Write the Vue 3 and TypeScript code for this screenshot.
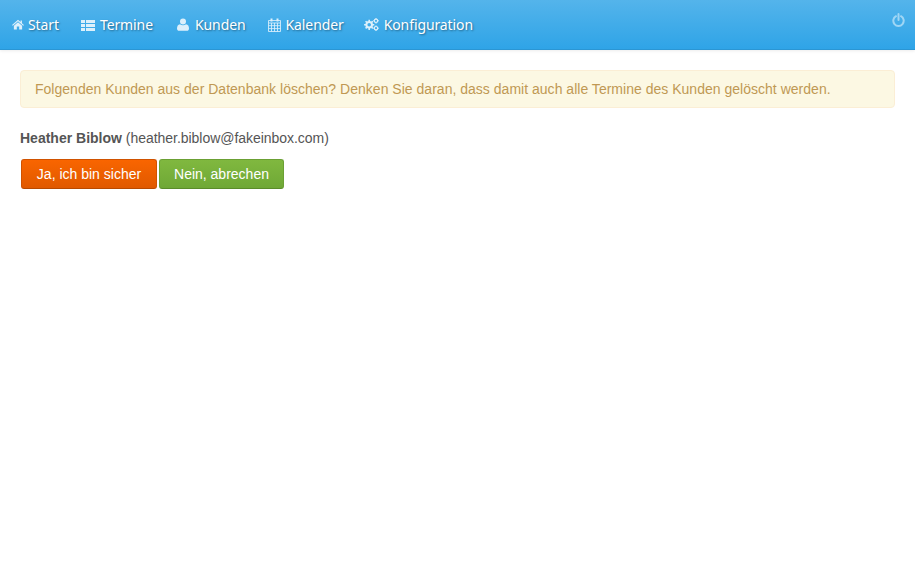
<script setup lang="ts">
const navItems = [
  { label: 'Start', icon: 'home' },
  { label: 'Termine', icon: 'list' },
  { label: 'Kunden', icon: 'user' },
  { label: 'Kalender', icon: 'calendar' },
  { label: 'Konfiguration', icon: 'cogs' },
];
</script>

<template>
  <div class="page">
    <header class="navbar">
      <nav class="nav">
        <a v-for="item in navItems" :key="item.label" class="nav-link" href="#">
          <svg v-if="item.icon === 'home'" class="icon icon-home" width="12" height="11" viewBox="0 0 13 12">
            <path d="M6.5 0.8 L9.3 3.3 V1.5 H10.8 V4.6 L13 6.6 L12.2 7.3 L6.5 2.4 L0.8 7.3 L0 6.6 Z M6.5 3.5 L11 7.3 V11.5 H7.8 V8.2 H5.2 V11.5 H2 V7.3 Z" />
          </svg>
          <svg v-else-if="item.icon === 'list'" class="icon icon-list" width="14" height="12" viewBox="0 0 14 12">
            <path d="M0 1 H4 V4 H0 Z M5 1 H14 V4 H5 Z M0 5 H4 V8 H0 Z M5 5 H14 V8 H5 Z M0 9 H4 V12 H0 Z M5 9 H14 V12 H5 Z" />
          </svg>
          <svg v-else-if="item.icon === 'user'" class="icon icon-user" width="12" height="13" viewBox="0 0 12 13">
            <circle cx="6" cy="3.4" r="3" />
            <path d="M3 6.2 C4.5 7.6 7.5 7.6 9 6.2 C11 6.6 12 8 12 10.5 C12 12 11 12.8 10 12.8 H2 C1 12.8 0 12 0 10.5 C0 8 1 6.6 3 6.2 Z" />
          </svg>
          <svg v-else-if="item.icon === 'calendar'" class="icon icon-calendar" width="13" height="14" viewBox="0 0 13 14">
            <path class="cal-lines" d="M0.5 2.5 H12.5 V13.5 H0.5 Z M0.5 5 H12.5 M0.5 7.7 H12.5 M0.5 10.6 H12.5 M3.5 5 V13.5 M6.5 5 V13.5 M9.5 5 V13.5" />
            <path d="M2.5 0.5 H4.5 V3.5 H2.5 Z M8.5 0.5 H10.5 V3.5 H8.5 Z" />
          </svg>
          <svg v-else class="icon icon-cogs" width="15" height="13" viewBox="0 0 15 13">
            <circle class="ring" cx="5.2" cy="6.8" r="2.8" stroke-width="2" />
            <path class="teeth" d="M5.2 1.7 V3.6 M5.2 10 V11.9 M0.1 6.8 H2 M8.4 6.8 H10.3 M1.6 3.2 L2.9 4.5 M7.5 9.1 L8.8 10.4 M8.8 3.2 L7.5 4.5 M2.9 9.1 L1.6 10.4" stroke-width="1.6" />
            <circle class="ring" cx="12" cy="2.8" r="1.7" stroke-width="1.2" />
            <path class="teeth" d="M12 0 V1.2 M12 4.4 V5.6 M9.2 2.8 H10.4 M13.6 2.8 H14.8" stroke-width="1" />
            <circle class="ring" cx="12" cy="10.2" r="1.7" stroke-width="1.2" />
            <path class="teeth" d="M12 7.4 V8.6 M12 11.8 V13 M9.2 10.2 H10.4 M13.6 10.2 H14.8" stroke-width="1" />
          </svg>
          <span>{{ item.label }}</span>
        </a>
      </nav>
      <a class="power" href="#" aria-label="Abmelden">
        <svg width="13" height="14" viewBox="0 0 13 14">
          <path d="M4 3.2 A5.2 5.2 0 1 0 9 3.2 M6.5 1 V7" fill="none" stroke="currentColor" stroke-width="2" stroke-linecap="round" />
        </svg>
      </a>
    </header>

    <main class="content">
      <div class="alert">Folgenden Kunden aus der Datenbank löschen? Denken Sie daran, dass damit auch alle Termine des Kunden gelöscht werden.</div>
      <p class="customer"><strong>Heather Biblow</strong> <span class="email">(heather.biblow@fakeinbox.com)</span></p>
      <div class="actions">
        <button class="btn btn-danger" type="button">Ja, ich bin sicher</button>
        <button class="btn btn-success" type="button">Nein, abrechen</button>
      </div>
    </main>
  </div>
</template>

<style scoped>
.page { min-height: 566px; background: #fff; font-family: "Liberation Sans", Arial, sans-serif; font-size: 14px; line-height: 20px; color: #555; }
.navbar { display: flex; justify-content: space-between; height: 50px; box-sizing: border-box; background: linear-gradient(to bottom, #54b4eb, #2fa4e7); border-bottom: 1px solid #2b96d4; box-shadow: 0 1px 3px rgba(0, 0, 0, 0.08); }
.nav { display: flex; padding-left: 1px; }
.nav-link { display: flex; align-items: center; padding: 0 11px; height: 49px; color: #fff; text-decoration: none; font-family: "Noto Sans", "Open Sans", sans-serif; font-size: 14px; letter-spacing: -0.1px; text-shadow: 1px 1px 2px rgba(0, 0, 0, 0.4); }
.icon { fill: #ddf0fb; }
.icon-home { margin-right: 4px; }
.icon-list { margin-right: 5px; }
.icon-user { margin-left: 2px; margin-right: 6px; }
.icon-calendar { margin-right: 5px; }
.icon-cogs { margin-left: -2px; margin-right: 5px; }
.cal-lines { fill: none; stroke: #ddf0fb; stroke-width: 1; opacity: 0.85; }
.ring { fill: none; stroke: #ddf0fb; }
.teeth { fill: none; stroke: #ddf0fb; }
.power { display: block; padding: 12px 10px 0 0; color: #9fd6f5; height: 14px; }
.content { padding: 20px; }
.alert { padding: 8px 14px; border: 1px solid #fbeed5; border-radius: 4px; background: #fcf8e3; color: #c09853; letter-spacing: 0.017px; }
.customer { margin: 20px 0 11px; }
.email { letter-spacing: -0.035px; }
.actions { display: flex; gap: 2px; padding-left: 1px; }
.btn { height: 30px; padding: 0; border-radius: 3px; font-family: inherit; font-size: 14px; color: #fff; cursor: pointer; }
.btn-danger { width: 136px; border: 1px solid #d05200; border-bottom-color: #b84900; background: linear-gradient(to bottom, #f96500, #e05900); }
.btn-success { width: 125px; border: 1px solid #6ba034; border-bottom-color: #5a8c2a; background: linear-gradient(to bottom, #80b83f, #6fa836); }
</style>
